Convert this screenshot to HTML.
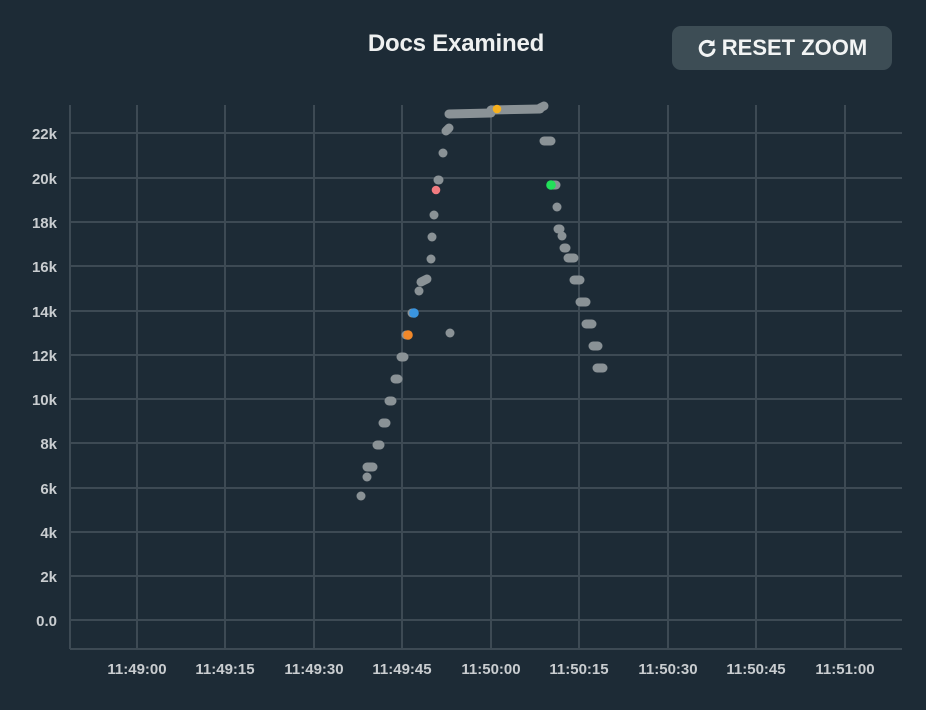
<!DOCTYPE html>
<html><head><meta charset="utf-8"><style>
html,body{margin:0;padding:0;background:#1d2b36;width:926px;height:710px;overflow:hidden;font-family:"Liberation Sans",sans-serif}
.title{position:absolute;left:0;width:912px;top:30px;text-align:center;color:#eef0f0;font-size:24px;font-weight:bold;letter-spacing:-0.2px}
.btn{position:absolute;left:672px;top:26px;width:220px;height:44px;background:#3d4d55;border-radius:9px;color:#f2f4f4;font-size:22px;font-weight:bold;display:flex;align-items:center;justify-content:center;gap:5px}
</style></head><body>
<div class="title">Docs Examined</div>
<div class="btn"><svg width="20" height="20" viewBox="0 0 20 20"><path d="M16 6.5A7 7 0 1 0 17 12" fill="none" stroke="#f2f4f4" stroke-width="3" stroke-linecap="round"/><path d="M17.5 1.5V8H11z" fill="#f2f4f4"/></svg><span>RESET ZOOM</span></div>
<svg width="926" height="710" style="position:absolute;left:0;top:0" font-family="Liberation Sans, sans-serif">
<g stroke="#3d4a54" stroke-width="2">
<line x1="70" y1="105" x2="70" y2="649"/>
<line x1="70" y1="649" x2="902" y2="649"/>
<line x1="137" y1="105" x2="137" y2="649"/><line x1="225" y1="105" x2="225" y2="649"/><line x1="314" y1="105" x2="314" y2="649"/><line x1="402" y1="105" x2="402" y2="649"/><line x1="491" y1="105" x2="491" y2="649"/><line x1="579" y1="105" x2="579" y2="649"/><line x1="668" y1="105" x2="668" y2="649"/><line x1="756" y1="105" x2="756" y2="649"/><line x1="845" y1="105" x2="845" y2="649"/>
<line x1="70" y1="620" x2="902" y2="620"/><line x1="70" y1="576" x2="902" y2="576"/><line x1="70" y1="532" x2="902" y2="532"/><line x1="70" y1="488" x2="902" y2="488"/><line x1="70" y1="443" x2="902" y2="443"/><line x1="70" y1="399" x2="902" y2="399"/><line x1="70" y1="355" x2="902" y2="355"/><line x1="70" y1="311" x2="902" y2="311"/><line x1="70" y1="266" x2="902" y2="266"/><line x1="70" y1="222" x2="902" y2="222"/><line x1="70" y1="178" x2="902" y2="178"/><line x1="70" y1="133" x2="902" y2="133"/>
</g>
<g fill="#c9cdd0" font-size="15" font-weight="bold" text-anchor="end">
<text x="57" y="626">0.0</text><text x="57" y="582">2k</text><text x="57" y="538">4k</text><text x="57" y="494">6k</text><text x="57" y="449">8k</text><text x="57" y="405">10k</text><text x="57" y="361">12k</text><text x="57" y="317">14k</text><text x="57" y="272">16k</text><text x="57" y="228">18k</text><text x="57" y="184">20k</text><text x="57" y="139">22k</text>
</g>
<g fill="#c9cdd0" font-size="15" font-weight="bold" text-anchor="middle">
<text x="137" y="674">11:49:00</text><text x="225" y="674">11:49:15</text><text x="314" y="674">11:49:30</text><text x="402" y="674">11:49:45</text><text x="491" y="674">11:50:00</text><text x="579" y="674">11:50:15</text><text x="668" y="674">11:50:30</text><text x="756" y="674">11:50:45</text><text x="845" y="674">11:51:00</text>
</g>
<g stroke="#8a9296" stroke-width="9" stroke-linecap="round" fill="none">
<line x1="361" y1="496" x2="361" y2="496"/>
<line x1="367" y1="477" x2="367" y2="477"/>
<line x1="367" y1="467" x2="373" y2="467"/>
<line x1="377" y1="445" x2="380" y2="445"/>
<line x1="383" y1="423" x2="386" y2="423"/>
<line x1="389" y1="401" x2="392" y2="401"/>
<line x1="395" y1="379" x2="398" y2="379"/>
<line x1="401" y1="357" x2="404" y2="357"/>
<line x1="406" y1="335" x2="408" y2="335"/>
<line x1="412" y1="313" x2="414" y2="313"/>
<line x1="419" y1="291" x2="419" y2="291"/>
<line x1="421" y1="282" x2="427" y2="279"/>
<line x1="431" y1="259" x2="431" y2="259"/>
<line x1="432" y1="237" x2="432" y2="237"/>
<line x1="434" y1="215" x2="434" y2="215"/>
<line x1="438" y1="180" x2="439" y2="180"/>
<line x1="443" y1="153" x2="443" y2="153"/>
<line x1="446" y1="131" x2="449" y2="128"/>
<line x1="450" y1="333" x2="450" y2="333"/>
<line x1="449" y1="114" x2="491" y2="113"/>
<line x1="491" y1="110" x2="540" y2="109"/>
<line x1="540" y1="108" x2="544" y2="106"/>
<line x1="544" y1="141" x2="551" y2="141"/>
<line x1="551" y1="185" x2="556" y2="185"/>
<line x1="557" y1="207" x2="557" y2="207"/>
<line x1="558" y1="229" x2="560" y2="229"/>
<line x1="562" y1="236" x2="562" y2="236"/>
<line x1="564" y1="248" x2="566" y2="248"/>
<line x1="568" y1="258" x2="574" y2="258"/>
<line x1="574" y1="280" x2="580" y2="280"/>
<line x1="580" y1="302" x2="586" y2="302"/>
<line x1="586" y1="324" x2="592" y2="324"/>
<line x1="593" y1="346" x2="598" y2="346"/>
<line x1="597" y1="368" x2="603" y2="368"/>
</g>
<circle cx="408" cy="335" r="4.8" fill="#f0882a"/>
<circle cx="414" cy="313" r="4.8" fill="#3a95e0"/>
<circle cx="436" cy="190" r="4.3" fill="#f27b80"/>
<circle cx="497" cy="109" r="4.3" fill="#f5b01f"/>
<circle cx="551" cy="185" r="4.8" fill="#22e05a"/>
</svg>
</body></html>
